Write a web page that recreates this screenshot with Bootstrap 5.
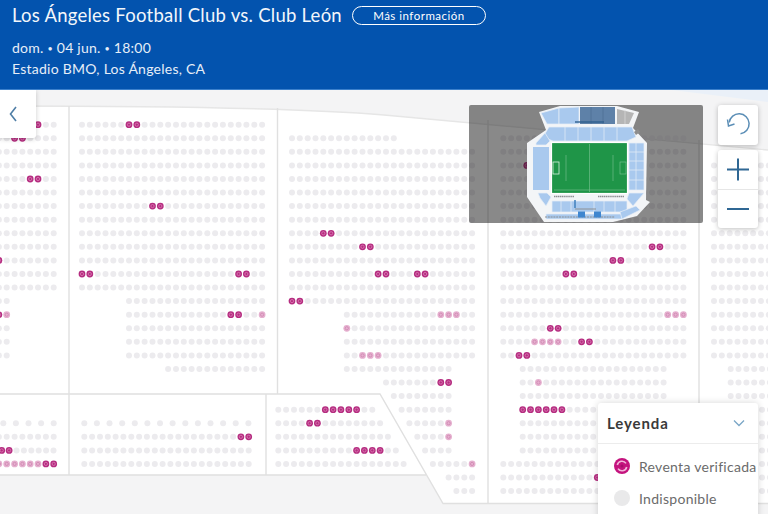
<!DOCTYPE html>
<html lang="es">
<head>
<meta charset="utf-8">
<title>Los Ángeles Football Club vs. Club León</title>
<link href="https://cdn.jsdelivr.net/npm/bootstrap@5.3.0/dist/css/bootstrap.min.css" rel="stylesheet">
<style>
html,body{height:514px;overflow:hidden;}
body{font-family:Lato,"Open Sans",sans-serif;background:#f4f4f5;}
.ev-head{height:90px;background:#0353ae;border-bottom:1px solid #3b80cc;color:#fff;padding:5px 12px 0;}
.ev-title{font-size:18.5px;line-height:21px;font-weight:400;margin:0;color:#f2f6fb;letter-spacing:.25px;}
.ev-more{font-size:11.5px;line-height:17px;width:134px;padding:0;border:1px solid #fff;border-radius:10px;color:#fff;background:transparent;letter-spacing:.5px;margin-left:10px;}
.ev-sub{font-size:14px;line-height:19.5px;margin-top:12px;color:#e6eef8;letter-spacing:.25px;}
.ev-sep{font-size:9px;vertical-align:1px;}
.map-stage{position:relative;height:424px;overflow:hidden;}
.map-svg{display:block;width:768px;height:424px;}
.back-tile{position:absolute;left:0;top:0;width:36px;height:48px;background:#fff;border:0;border-radius:0 0 3px 0;box-shadow:0 1px 5px rgba(0,0,0,.2);padding:0;}
.mini-map{position:absolute;left:469px;top:15px;width:234px;height:118px;background:rgba(20,20,20,.5);border-radius:2px;}
.mini-map svg{display:block;}
.ctrl-tile{position:absolute;left:718px;width:40px;background:#fff;border-radius:3px;box-shadow:0 1px 5px rgba(0,0,0,.25);}
.ctrl-one{top:15px;height:40px;}
.ctrl-two{top:60px;height:78px;}
.ctrl-btn{display:flex;align-items:center;justify-content:center;width:40px;height:39px;padding:0;border:0;background:transparent;}
.ctrl-two .ctrl-btn+.ctrl-btn{border-top:1px solid #e6e6e6;}
.legend-box{position:absolute;left:598px;top:313px;width:160px;height:120px;border:0;border-radius:3px 3px 0 0;box-shadow:0 0 7px rgba(0,0,0,.16);}
.legend-top{height:41px;padding:0 9px;border-bottom:1px solid #ececec;}
.legend-name{font-size:15px;font-weight:700;color:#3a3a3a;letter-spacing:.9px;}
.legend-row{font-size:14px;color:#6b6b6b;padding-left:16px;height:32px;gap:9px;white-space:nowrap;letter-spacing:.28px;}
.legend-rows{padding-top:6px;}
</style>
</head>
<body>
<header class="ev-head">
  <div class="d-flex align-items-center">
    <h1 class="ev-title">Los Ángeles Football Club vs. Club León</h1>
    <button type="button" class="btn ev-more">Más información</button>
  </div>
  <div class="ev-sub">dom. <span class="ev-sep">•</span> 04 jun. <span class="ev-sep">•</span> 18:00<br>Estadio BMO, Los Ángeles, CA</div>
</header>
<main class="map-stage">
  <svg class="map-svg" id="seatmap" viewBox="0 90 768 424" aria-label="Mapa de asientos">
    <path d="M672,90 L768,102 V90Z" fill="#eaf0f8"/>
    <path d="M0,106 C150,106 300,108 384,115 S600,134 768,150 V504 H443 L426,475 H0Z" fill="#fff"/>
    <g fill="none" stroke="#e0e0e0" stroke-width="1.4">
      <path d="M0,106 C150,106 300,108 384,115 S600,134 768,150" stroke="#e6e6e6"/>
      <path d="M69,106 V475 M277.5,108 V394 M266,394 V475 M488,120 V504 M699,140 V504"/>
      <path d="M0,394 H380 L443,503.5 H768 M0,475 H426"/>
    </g>
  </svg>
  <button type="button" class="back-tile" aria-label="Volver">
    <svg width="36" height="48" viewBox="0 0 36 48"><path d="M16,17 L10.5,24 L16,31" fill="none" stroke="#4f7ea6" stroke-width="1.6"/></svg>
  </button>
  <div class="mini-map">
    <svg width="234" height="118" viewBox="469 105 234 118">
      <path d="M539,112 L560,106 L617,106 L639,112 L633,128 L647,143 L646,200 L650,202 L637,216 L613,222 L544,222 L527,197 L527,143 L546,130Z" fill="#f3f5f7"/>
      <g fill="#a9c9ee" stroke="#e6eef7" stroke-width=".7">
        <path d="M541,113 L559,108 V124 L547,124Z"/><path d="M559,108 L579,107 V124 H559Z"/>
        <path d="M549,127 H632 L636,137 L627,141 H553 L543,137Z"/>
        <path d="M565,127 V141 M578,127 V141 M591,127 V141 M604,127 V141 M617,127 V141" fill="none"/>
        <path d="M533,147 H549 V190 H533Z" stroke="none"/>
        <path d="M536,143 L545,133 L550,141 L546,145 H536Z"/>
        <path d="M538,193 H547 L551,197 L546,206 L540,198Z"/>
        <path d="M629,143 H644 V190 H629Z"/>
        <path d="M629,152 H644 M629,161 H644 M629,170 H644 M629,180 H644 M636,143 V190" fill="none"/>
        <path d="M629,193 H644 L633,206 L627,199Z"/>
        <path d="M552,201 H627 V212 H552Z"/>
        <path d="M561,201 V212 M571,201 V212 M594,201 V212 M604,201 V212 M615,201 V212" fill="none"/>
        <path d="M546,214 H622 V219 H546Z"/>
        <path d="M620,212 L636,206 L640,210 L622,219Z"/>
      </g>
      <path d="M580,107 H615 V124 H580Z" fill="#5e81a8"/>
      <path d="M591,107 V124 M603,107 V124" stroke="#4f7095" stroke-width=".8"/>
      <path d="M575,122 H604" stroke="#2f5f8f" stroke-width="1.4"/>
      <path d="M617,109 L634,113 L629,124 H617Z" fill="#b5b5b5"/>
      <path d="M625,110 V124" stroke="#d8d8d8" stroke-width=".8"/>
      <path d="M634,132 L638,129 L640,132 L636,135Z" fill="#8d8d8d"/>
      <rect x="551.5" y="142.5" width="76" height="51" fill="#1f9548" stroke="#fff" stroke-width="1.2"/>
      <g fill="none" stroke="#7cc594" stroke-width=".6">
        <path d="M589.5,144 V192 M566,155 V181 M613,155 V181 M554,190 H625"/>
        <rect x="553" y="162" width="6" height="12" stroke="#d8f0df" stroke-width=".8"/>
        <rect x="620" y="162" width="6" height="12"/>
      </g>
      <path d="M554,196.5 H574 M598,196.5 H624" stroke="#8c8f92" stroke-width="1.6" stroke-dasharray="1.4 .5"/>
      <path d="M575,200 V208" stroke="#3f7fbd" stroke-width="1.5"/>
      <path d="M575,209 H596" stroke="#8c8f92" stroke-width="1"/>
      <path d="M545,217 H615" stroke="#8c8f92" stroke-width="1" stroke-dasharray="2 .8"/>
      <rect x="578" y="211.5" width="7" height="6" fill="#3f86cf"/>
      <rect x="594" y="211.5" width="7" height="6" fill="#3f86cf"/>
    </svg>
  </div>
  <div class="ctrl-tile ctrl-one">
    <button type="button" class="ctrl-btn" aria-label="Restablecer">
      <svg width="40" height="39" viewBox="718 105 40 39"><path d="M740.5,133.7 A10 10 0 1 0 729.2,122.5" fill="none" stroke="#5b8eb6" stroke-width="1.5"/><path d="M727.5,119.5 L728.5,126 L734.5,124" fill="none" stroke="#5b8eb6" stroke-width="1.5"/></svg>
    </button>
  </div>
  <div class="ctrl-tile ctrl-two">
    <button type="button" class="ctrl-btn" aria-label="Acercar">
      <svg width="40" height="39" viewBox="0 0 40 39"><path d="M9,19.5 H31 M20,8.5 V30.5" stroke="#2f6794" stroke-width="2" fill="none"/></svg>
    </button>
    <button type="button" class="ctrl-btn" aria-label="Alejar">
      <svg width="40" height="39" viewBox="0 0 40 39"><path d="M9,19 H31" stroke="#2f6794" stroke-width="2" fill="none"/></svg>
    </button>
  </div>
  <aside class="card legend-box">
    <div class="legend-top d-flex align-items-center justify-content-between">
      <span class="legend-name">Leyenda</span>
      <svg width="12" height="8" viewBox="0 0 12 8" class="me-1"><path d="M1,1.5 L6,6.5 L11,1.5" fill="none" stroke="#7aa6c6" stroke-width="1.3"/></svg>
    </div>
    <div class="legend-rows">
      <div class="legend-row d-flex align-items-center">
        <svg width="16" height="16" viewBox="0 0 16 16" class="flex-shrink-0"><circle cx="8" cy="8" r="8" fill="#c4137e"/><path d="M3.3,7 A4.8 4.8 0 0 1 12,5.4 M12.7,9 A4.8 4.8 0 0 1 4,10.6" fill="none" stroke="#f2b6da" stroke-width="1.6"/><circle cx="8" cy="8" r="1.5" fill="#a80d6c"/></svg>
        <span>Reventa verificada</span>
      </div>
      <div class="legend-row d-flex align-items-center">
        <svg width="16" height="16" viewBox="0 0 16 16" class="flex-shrink-0"><circle cx="8" cy="8" r="8" fill="#e9e9ea"/></svg>
        <span>Indisponible</span>
      </div>
    </div>
  </aside>
</main>
<script>
(function(){
  var P=7.83, NS='http://www.w3.org/2000/svg', svg=document.getElementById('seatmap');
  var g=document.createElementNS(NS,'g');
  function dot(x,y,kind){
    var c=document.createElementNS(NS,'circle');
    c.setAttribute('cx',x.toFixed(1));c.setAttribute('cy',y.toFixed(1));
    if(kind===0){c.setAttribute('r','3');c.setAttribute('fill','#ecebee');g.appendChild(c);return;}
    c.setAttribute('r','3.4');c.setAttribute('fill',kind===1?'#b52d80':'#e5b0cf');g.appendChild(c);
    var d=document.createElementNS(NS,'circle');
    d.setAttribute('cx',x.toFixed(1));d.setAttribute('cy',y.toFixed(1));d.setAttribute('r','1.6');
    d.setAttribute('fill','none');d.setAttribute('stroke',kind===1?'#dc7db5':'#cf85b0');d.setAttribute('stroke-width','.8');g.appendChild(d);
  }
  // row n, first x, from i, to i, dark seats, light seats
  function row(n,x0,a,b,dark,light,step){
    var y=124.7+13.57*n; dark=dark||[];light=light||[];
    for(var i=a;i<=b;i++){dot(x0+i*(step||P),y,dark.indexOf(i)>=0?1:light.indexOf(i)>=0?2:0);}
  }
  var n;
  // block 1
  var d1={0:[5],1:[2,3],4:[4,5],10:[0]};
  for(n=0;n<=12;n++)row(n,-1.1,0,7,d1[n]);
  for(n=13;n<=17;n++)row(n,-1.1,0,1,n==14?[0]:[],n==14?[1]:[]);
  // block 2
  var d2={0:[6,7],6:[9,10],11:[0,1,20,21]};
  for(n=0;n<=12;n++)row(n,82,0,23,d2[n]);
  for(n=13;n<=17;n++)row(n,82,6,23,n==14?[19,20]:[],n==14?[23]:[]);
  row(18,82,11,23);
  // block 3
  row(1,292,0,13);
  var d3={8:[4,5],9:[9,10],11:[11,12,16,17],13:[0,1]};
  for(n=2;n<=13;n++)row(n,292,0,23,d3[n]);
  row(14,292,7,23,[],[19,20,21]);row(15,292,7,23,[],[7]);row(16,292,7,23);row(17,292,7,23,[],[9,10,11]);
  row(18,292,7,20);row(19,292,12,20,[19,20]);row(20,292,13,20);row(21,292,14,20);
  row(22,292,15,20,[],[20]);row(23,292,16,20,[],[20]);row(24,292,17,20);
  row(25,292,18,23,[],[23]);row(26,292,20,23);row(27,292,21,23);
  // block 4
  var d4={3:[3],9:[19,20],10:[14,15],11:[8,9],15:[6,7],16:[10,11],17:[2,3]},l4={14:[21,22,23],16:[4,5,6,7]};
  for(n=1;n<=17;n++)row(n,503.3,0,23,d4[n],l4[n]);
  for(n=18;n<=24;n++)row(n,522.7,0,18,n==21?[0,1,2,3,4,5]:[],n==19?[2]:[]);
  row(25,503.3,0,23);row(26,503.3,0,23,[12]);row(27,503.3,0,23);
  // block 5
  for(n=3;n<=17;n++)row(n,714,0,7);
  for(n=18;n<=27;n++)row(n,730.7,0,5);
  // lower blocks
  row(22,3.3,0,4,[],[],12.6);
  row(23,-1.1,0,7);row(24,1.7,0,7,[0,1],[],7.4);row(25,-1.1,0,7,[6,7],[0,1,2,3,4,5]);
  row(22,84.3,0,13,[],[],12.62);
  row(23,84.3,0,21,[20,21]);row(24,84.3,0,21);row(25,84.3,0,21);
  row(21,278.3,0,12,[6,7,8,9,10]);
  row(22,278.3,0,13,[4,5]);row(23,278.3,0,14);row(24,278.3,0,15,[10,11,12,13]);row(25,278.3,0,16);
  svg.appendChild(g);
})();
</script>
<script src="https://cdn.jsdelivr.net/npm/bootstrap@5.3.0/dist/js/bootstrap.bundle.min.js"></script>
</body>
</html>
